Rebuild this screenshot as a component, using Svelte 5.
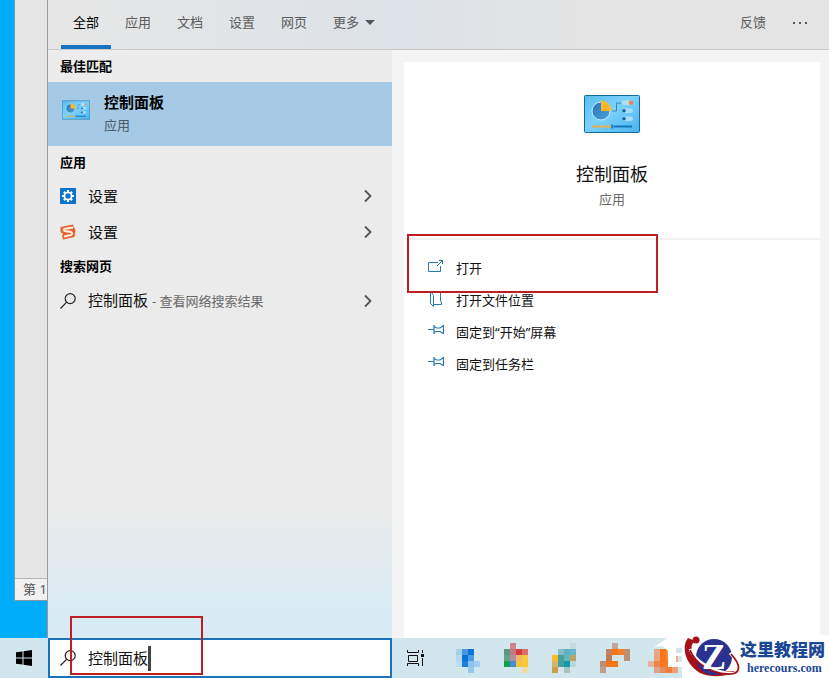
<script>
  let query = $state('控制面板');
  let activeTab = $state('全部');

  const tabs = ['全部', '应用', '文档', '设置', '网页'];

  const actions = [
    { icon: 'open', label: '打开', marked: true },
    { icon: 'folder', label: '打开文件位置' },
    { icon: 'pin', label: '固定到“开始”屏幕' },
    { icon: 'pin', label: '固定到任务栏' }
  ];

  // blurred taskbar icons: [column, row, colour], 6px cells
  const pinned = [
    {
      name: '应用 1',
      cells: [
        [0, 1, '#a6d0ee'], [1, 1, '#4696e2'], [2, 1, '#0c74d6'],
        [0, 2, '#b4d8ee'], [1, 2, '#0c72d6'], [2, 2, '#4b9de6'],
        [0, 3, '#b9dcef'], [1, 3, '#1c80da'], [2, 3, '#8cc2ee'], [3, 3, '#a4ccf4'],
        [2, 4, '#98c8ee']
      ]
    },
    {
      name: '应用 2',
      cells: [
        [1, 0, '#cf8590'],
        [0, 1, '#569880'], [1, 1, '#c47884'], [2, 1, '#d63c40'], [3, 1, '#dc6c68'],
        [0, 2, '#64a088'], [1, 2, '#b08e9c'], [2, 2, '#eab868'], [3, 2, '#f6c83c'],
        [0, 3, '#12a04c'], [1, 3, '#4c88d8'], [2, 3, '#f2c440'], [3, 3, '#fcc630'],
        [3, 4, '#eedca4']
      ]
    },
    {
      name: '应用 3',
      cells: [
        [3, 0, '#c4dcdc'],
        [1, 1, '#84bcc4'], [2, 1, '#60b0c4'], [3, 1, '#68b4c8'],
        [0, 2, '#f8ba28'], [1, 2, '#48a09c'], [2, 2, '#68b4bc'], [3, 2, '#b8a468'],
        [0, 3, '#d8b46c'], [1, 3, '#44a098'], [2, 3, '#1898ac'], [3, 3, '#b8d8dc'],
        [0, 4, '#cc9c48'], [2, 4, '#a8c4bc']
      ]
    },
    {
      name: '应用 4',
      cells: [
        [2, 0, '#c0a69c'],
        [1, 1, '#c4835c'], [2, 1, '#f47416'], [3, 1, '#f08030'], [4, 1, '#c08c70'],
        [1, 2, '#c07c54'], [4, 2, '#bc9078'],
        [0, 3, '#bc8c74'], [1, 3, '#f07818'], [2, 3, '#f07818'],
        [0, 4, '#c09c8c']
      ]
    },
    {
      name: '应用 5',
      cells: [
        [1, 1, '#e8a888'], [2, 1, '#f87818'], [3, 1, '#f88c44'],
        [1, 2, '#eca47c'], [2, 2, '#fc741c'], [3, 2, '#f88438'], [4, 2, '#f4b08c'],
        [0, 3, '#e8b49c'], [1, 3, '#e88850'], [2, 3, '#fc7820'], [3, 3, '#f87c28'], [4, 3, '#f4a478'],
        [1, 4, '#dca48c'], [2, 4, '#e48c60'], [3, 4, '#f07c38'], [4, 4, '#f0a078']
      ]
    }
  ];
</script>

{#snippet panelIcon()}
  <svg class="panel-icon" viewBox="0 0 56 38" aria-hidden="true">
    <defs>
      <linearGradient id="board" x1="0" y1="0" x2="1" y2="1">
        <stop offset="0" stop-color="#58bdf0" />
        <stop offset="0.45" stop-color="#7bd2fb" />
        <stop offset="1" stop-color="#48b4ee" />
      </linearGradient>
      <linearGradient id="disc" x1="0" y1="0" x2="1" y2="1">
        <stop offset="0" stop-color="#2275b8" />
        <stop offset="1" stop-color="#4fa0da" />
      </linearGradient>
    </defs>
    <rect x="0.5" y="0.5" width="55" height="37" rx="1" fill="url(#board)" stroke="#17699c" />
    <circle cx="17" cy="16" r="9" fill="url(#disc)" stroke="#c5ebff" />
    <path d="M17 16V5.500A10.500 10.500 0 0 1 27.500 16Z" fill="#fdb62a" />
    <path d="M28 16H32.500V8H37" fill="none" stroke="#3389bd" />
    <rect x="38" y="5.500" width="11" height="4.500" rx="2.200" fill="#b4def5" />
    <circle cx="47" cy="7.700" r="2.200" fill="#ee8354" />
    <rect x="38" y="13.500" width="11" height="4.500" rx="2.200" fill="#a9dcf7" />
    <circle cx="40" cy="15.700" r="1.800" fill="#16659e" />
    <rect x="38" y="21.500" width="11" height="4.500" rx="2.200" fill="#a9dcf7" />
    <circle cx="40" cy="23.700" r="1.800" fill="#16659e" />
    <path d="M8 31.500H27" stroke="#e9ae4d" stroke-width="2" />
    <path d="M30 31.500H48" stroke="#1676bd" stroke-width="2" />
    <rect x="27" y="29.500" width="2.500" height="4" fill="#2687bd" />
  </svg>
{/snippet}

{#snippet magnifier()}
  <svg class="icon" viewBox="0 0 16 16" fill="none" stroke="#222" stroke-width="1.200" aria-hidden="true">
    <circle cx="10.200" cy="5.600" r="5" />
    <path d="M6.700 9.200L0.500 15.500" />
  </svg>
{/snippet}

{#snippet chevron()}
  <svg class="chevron" viewBox="0 0 8 14" fill="none" stroke="#555" stroke-width="1.800" aria-hidden="true">
    <path d="M1 1.500L6.500 7L1 12.500" />
  </svg>
{/snippet}

<div class="screen">
  <div class="workspace">
    <aside class="desktop">
      <div class="window">
        <div class="page"></div>
        <div class="window-status">第 1</div>
      </div>
    </aside>

    <main class="search">
      <header class="tabs">
        <nav>
          {#each tabs as tab}
            <button class="tab" class:active={activeTab === tab} onclick={() => (activeTab = tab)}>
              {tab}
            </button>
          {/each}
          <button class="tab more">
            更多
            <svg viewBox="0 0 10 5" aria-hidden="true"><path d="M0 0H10L5 5Z" fill="#555" /></svg>
          </button>
        </nav>
        <div class="tools">
          <button class="tab">反馈</button>
          <button class="tab dots" aria-label="选项">
            <svg viewBox="0 0 16 2" fill="#555" aria-hidden="true">
              <rect x="1" width="2" height="2" /><rect x="7" width="2" height="2" /><rect x="13" width="2" height="2" />
            </svg>
          </button>
        </div>
      </header>

      <div class="body">
        <section class="results">
          <h2>最佳匹配</h2>
          <button class="best">
            {@render panelIcon()}
            <span class="best-text">
              <strong>控制面板</strong>
              <span>应用</span>
            </span>
          </button>

          <h2>应用</h2>
          <button class="row">
            <svg class="icon" viewBox="0 0 16 16" fill="none" stroke="#fff" aria-hidden="true">
              <rect width="16" height="16" fill="#0b73cf" stroke="none" />
              <circle cx="8" cy="8" r="3.600" stroke-width="1.800" />
              <path d="M8 2V4M8 12V14M2 8H4M12 8H14M3.800 3.800L5.200 5.200M10.800 10.800L12.200 12.200M12.200 3.800L10.800 5.200M5.200 10.800L3.800 12.200" stroke-width="2" />
            </svg>
            <span>设置</span>
            {@render chevron()}
          </button>
          <button class="row">
            <svg class="icon" viewBox="0 0 16 16" fill="none" aria-hidden="true">
              <path d="M0.500 3L13 0.500L14 3.500L15.500 6L14.500 13L3 15.500L2 12L3 10L0.500 8Z" fill="#e4632d" />
              <path d="M13 3.500L5 4.700Q2.800 5.300 4.500 7L11 8Q13.200 9.500 11 11L4 12.500" stroke="#fff0e6" stroke-width="2" />
            </svg>
            <span>设置</span>
            {@render chevron()}
          </button>

          <h2>搜索网页</h2>
          <button class="row">
            {@render magnifier()}
            <span>控制面板 <small>- 查看网络搜索结果</small></span>
            {@render chevron()}
          </button>
        </section>

        <section class="preview">
          <div class="card">
            <div class="summary">
              {@render panelIcon()}
              <h1>控制面板</h1>
              <p>应用</p>
            </div>
            <ul>
              {#each actions as action}
                <li class:marked={action.marked}>
                  <button>
                    <svg class="icon" viewBox="0 0 16 16" fill="none" stroke="#2878b5" aria-hidden="true">
                      {#if action.icon === 'open'}
                        <path d="M10 2.500H0.500V11.500H12.500V6M9 6L14.500 0.500M11 0.500H14.500V4" />
                      {:else if action.icon === 'folder'}
                        <path d="M2.500 0.500V11.500L5.500 14.500V3.500L3.500 0.500H12.500V9L13.500 10V12.500H6" />
                      {:else}
                        <path d="M0 5.500H5.500M6 1V10M6 2.500L8.500 4H12L15.500 1.500V9.500L12 7.500H8.500L6 8.500" stroke-width="1.200" />
                      {/if}
                    </svg>
                    {action.label}
                  </button>
                </li>
              {/each}
            </ul>
          </div>
        </section>
      </div>
    </main>
  </div>

  <footer class="taskbar">
    <button class="start" aria-label="开始">
      <svg class="icon" viewBox="0 0 16 16" aria-hidden="true">
        <path d="M0 2.300L6.500 1.400V7.500H0ZM7.500 1.200L16 0V7.500H7.500ZM0 8.500H6.500V14.600L0 13.700ZM7.500 8.500H16V16L7.500 14.800Z" />
      </svg>
    </button>
    <label class="searchbox">
      {@render magnifier()}
      <input type="text" aria-label="搜索" bind:value={query} />
      <span class="caret"></span>
    </label>
    <button class="taskview" aria-label="任务视图">
      <svg viewBox="0 0 18 16" fill="none" stroke="#111" aria-hidden="true">
        <path d="M0.500 0V2.500H11.500V0M1.500 5.500H10.500V11.500H1.500ZM0.500 16V13.500H11.500V16M15.500 0V3M15.500 8V16" />
        <rect x="14.500" y="4.500" width="2" height="2" fill="#111" />
      </svg>
    </button>
    <div class="pinned">
      {#each pinned as app}
        <button aria-label={app.name}>
          <svg viewBox="0 0 30 30" shape-rendering="crispEdges" aria-hidden="true">
            {#each app.cells as [x, y, fill]}
              <rect x={x * 6} y={y * 6} width="6" height="6" {fill} />
            {/each}
          </svg>
        </button>
      {/each}
    </div>

    <span class="search-mark"></span>

    <div class="brand">
      <svg class="ghost" viewBox="0 0 30 48" aria-hidden="true">
        <path d="M2 17L14 9L22 2L30 5V18H24V23H30V26H24V32H30V37H16V21L11 16Z" fill="#fff" />
      </svg>
      <div class="brand-box">
        <svg class="logo" viewBox="0 0 58 43" aria-hidden="true">
          <path d="M6 3C-1 12 3 29 18 38C30 43 45 42 54 36C42 38 25 34 15 24C8 16 8 10 13 6Z" fill="#a50f18" />
          <circle cx="32" cy="22" r="18" fill="#29338f" />
          <path d="M48 18C61 31 60 41 44 38C28 35 13 26 8 14" fill="none" stroke="#fff" stroke-width="3" />
          <path d="M49 19C60 31 59 40 45 39C30 38 14 30 8 15" fill="none" stroke="#a50f18" stroke-width="1.800" />
          <circle cx="14" cy="5" r="3.500" fill="#a50f18" />
          <text x="32" y="34" text-anchor="middle">Z</text>
        </svg>
        <div class="brand-text">
          <strong>这里教程网</strong>
          <span>herecours.com</span>
        </div>
      </div>
    </div>
  </footer>
</div>

<style>
  :global(body) {
    margin: 0;
    font-family: "Noto Sans", "Noto Sans CJK SC", sans-serif;
    font-size: 13px;
    color: #111;
  }

  .screen {
    display: flex;
    flex-direction: column;
    min-height: 100vh;
    overflow: hidden;
  }

  button {
    border: none;
    padding: 0;
    background: none;
    font: inherit;
    color: inherit;
    text-align: left;
    cursor: pointer;
  }

  h1,
  h2,
  p,
  ul {
    margin: 0;
    padding: 0;
  }

  svg {
    display: block;
    flex: none;
  }

  .icon {
    width: 16px;
    height: 16px;
  }

  .workspace {
    flex: 1;
    display: flex;
  }

  .desktop {
    box-sizing: border-box;
    width: 47px;
    padding: 0 0 37px 14px;
    display: flex;
    background: #00adfb;
  }

  .window {
    flex: 1;
    display: flex;
    flex-direction: column;
    background: #e6e6e6;
    border-left: 1px solid #6f9cb4;
    border-bottom: 1px solid #8a979e;
  }

  .page {
    flex: 1;
    border-bottom: 1px solid #b5b5b5;
  }

  .window-status {
    padding-left: 8px;
    line-height: 21px;
    color: #555;
    background: #f1f1f1;
    white-space: nowrap;
  }

  .search {
    flex: 1;
    display: flex;
    flex-direction: column;
    border-left: 1px solid #999;
  }

  .tabs {
    display: flex;
    justify-content: space-between;
    height: 49px;
    border-bottom: 1px solid #c6c8ca;
    background: linear-gradient(90deg, #e6e6e6, #dde2e8 45%, #e4e4e4 70%);
  }

  nav,
  .tools {
    display: flex;
    gap: 2px;
  }

  nav {
    padding-left: 13px;
  }

  .tools {
    padding-right: 9px;
  }

  .tab {
    box-sizing: border-box;
    padding: 0 12px;
    line-height: 45px;
    color: #5c5c5c;
    border-bottom: 4px solid transparent;
  }

  .tab.active {
    color: #000;
    border-bottom-color: #1a73be;
  }

  .more,
  .dots {
    display: flex;
    align-items: center;
    gap: 6px;
  }

  .more svg {
    width: 10px;
    height: 5px;
  }

  .dots svg {
    width: 16px;
    height: 2px;
  }

  .body {
    flex: 1;
    display: flex;
  }

  .results {
    flex: none;
    width: 344px;
    background: linear-gradient(#ececec, #eaeaea 78%, #d8ebf4 96%);
  }

  h2 {
    padding-left: 12px;
    font-size: 13px;
    line-height: 32px;
    color: #000;
  }

  .best {
    display: flex;
    align-items: center;
    gap: 14px;
    box-sizing: border-box;
    width: 100%;
    height: 64px;
    padding: 0 14px;
    background: #a6c9e6;
  }

  .best .panel-icon {
    width: 28px;
    height: 20px;
    margin-bottom: 8px;
  }

  .best-text {
    display: grid;
    line-height: 23px;
    color: #4c5c69;
  }

  .best-text strong {
    font-size: 15px;
    color: #000;
  }

  .row {
    display: flex;
    align-items: center;
    gap: 12px;
    width: 100%;
    padding: 0 20px 0 12px;
    font-size: 15px;
    line-height: 36px;
  }

  .row span {
    flex: 1;
  }

  .row small {
    font-size: 13px;
    color: #6a6a6a;
  }

  .chevron {
    width: 8px;
    height: 14px;
  }

  .preview {
    flex: 1;
    display: flex;
    padding: 12px 9px 0 12px;
    background: #f4f4f4;
  }

  .card {
    flex: 1;
    background: #fff;
  }

  .summary {
    display: flex;
    flex-direction: column;
    align-items: center;
    padding: 32px 0 26px;
    border-bottom: 2px solid #f1f1f1;
  }

  .summary .panel-icon {
    width: 56px;
    height: 40px;
  }

  h1 {
    margin-top: 28px;
    font-size: 18px;
    font-weight: 400;
    line-height: 24px;
  }

  .summary p {
    line-height: 26px;
    color: #6a6a6a;
  }

  ul {
    padding: 12px 0;
    list-style: none;
  }

  li {
    position: relative;
  }

  li button {
    display: flex;
    align-items: center;
    gap: 12px;
    width: 100%;
    padding-left: 24px;
    line-height: 32px;
  }

  .marked::after {
    content: "";
    position: absolute;
    z-index: 1;
    top: -18px;
    left: 3px;
    box-sizing: border-box;
    width: 251px;
    height: 59px;
    border: 2px solid #bd1f25;
    pointer-events: none;
  }

  .taskbar {
    position: relative;
    display: flex;
    height: 40px;
    background: #d2e6ee;
  }

  .start {
    width: 48px;
    padding-left: 16px;
  }

  .searchbox {
    box-sizing: border-box;
    width: 344px;
    display: flex;
    align-items: center;
    padding: 0 10px;
    background: #fff;
    border: 2px solid #1c72b9;
  }

  input {
    field-sizing: content;
    max-width: 280px;
    margin-left: 12px;
    padding: 0;
    border: none;
    outline: none;
    background: none;
    font: inherit;
    font-size: 15px;
    line-height: 24px;
    color: #111;
  }

  .caret {
    width: 3px;
    height: 25px;
    background: #444;
  }

  .taskview {
    width: 48px;
    padding-left: 15px;
  }

  .taskview svg {
    width: 18px;
    height: 16px;
  }

  .pinned {
    display: flex;
    align-items: center;
    gap: 18px;
    padding-left: 16px;
  }

  .pinned svg {
    width: 30px;
    height: 30px;
  }

  .search-mark {
    position: absolute;
    top: -22px;
    left: 70px;
    box-sizing: border-box;
    width: 133px;
    height: 59px;
    border: 2px solid #bd1f25;
    pointer-events: none;
  }

  .brand {
    position: absolute;
    right: 0;
    bottom: 0;
    display: flex;
    align-items: flex-end;
  }

  .ghost {
    width: 30px;
    height: 48px;
  }

  .brand-box {
    display: flex;
    align-items: center;
    box-sizing: border-box;
    width: 147px;
    height: 43px;
    background: #fff;
  }

  .logo {
    width: 58px;
    height: 43px;
  }

  .logo text {
    font-family: "Liberation Serif", serif;
    font-size: 36px;
    font-weight: 700;
    fill: #fff;
  }

  .brand-text {
    display: grid;
    color: #1b4797;
    white-space: nowrap;
  }

  .brand-text strong {
    font-size: 17px;
    font-weight: 900;
    line-height: 22px;
  }

  .brand-text span {
    padding-left: 7px;
    font-family: "Liberation Serif", serif;
    font-size: 12px;
    font-weight: 700;
    line-height: 14px;
  }
</style>
